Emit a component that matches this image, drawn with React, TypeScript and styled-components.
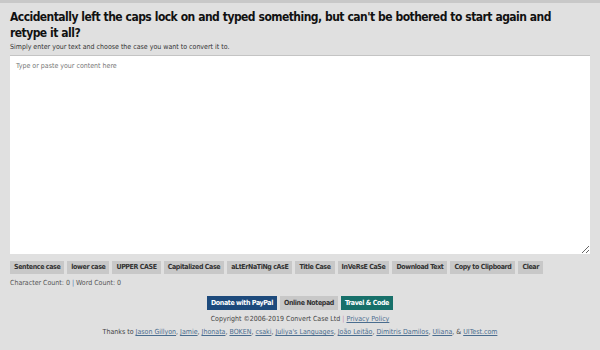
import React from "react";
import styled, { createGlobalStyle } from "styled-components";

const GlobalStyle = createGlobalStyle`
  html, body {
    margin: 0;
    padding: 0;
    background: #e0e0e0;
  }
  body {
    border-top: 3px solid #c8c8c8;
    font-family: "DejaVu Sans Condensed", "DejaVu Sans", sans-serif;
    color: #222;
  }
`;

const Page = styled.div`
  padding: 6px 10px 0 10px;
  display: flex;
  flex-direction: column;
`;

const Title = styled.h1`
  margin: 0;
  font-size: 12px;
  line-height: 16px;
  font-weight: bold;
  letter-spacing: -0.55px;
  word-spacing: 0.3px;
  color: #111;
`;

const Lead = styled.p`
  margin: 2px 0 3px 0;
  font-size: 7px;
  line-height: 9px;
  color: #333;
`;

const Editor = styled.textarea`
  box-sizing: border-box;
  width: 100%;
  height: 199px;
  margin: 0;
  border: none;
  border-top: 1px solid #c4c4c4;
  background: #fff;
  padding: 6px 6px;
  font-family: inherit;
  font-size: 7px;
  line-height: 9px;
  outline: none;
  display: block;
  &::placeholder {
    color: #777;
  }
`;

const ButtonRow = styled.div`
  display: flex;
  flex-wrap: wrap;
  gap: 3px;
  margin-top: 7px;
`;

const CaseButton = styled.button<{ $tone?: "grey" | "navy" | "teal"; $tall?: boolean }>`
  height: ${(p) => (p.$tall ? 14 : 13)}px;
  padding: 0 4px;
  border: none;
  margin: 0;
  font-family: inherit;
  font-size: 7px;
  font-weight: bold;
  letter-spacing: -0.38px;
  line-height: 13px;
  cursor: pointer;
  background: ${(p) =>
    p.$tone === "navy" ? "#1d4a7c" : p.$tone === "teal" ? "#17706a" : "#c8c8c8"};
  color: ${(p) => (p.$tone === "navy" || p.$tone === "teal" ? "#fff" : "#333")};
`;

const Counts = styled.div`
  margin-top: 5px;
  font-size: 7px;
  line-height: 9px;
  color: #555;
`;

const Sep = styled.span`
  color: #4a7ab0;
`;

const Footer = styled.div`
  display: flex;
  flex-direction: column;
  align-items: center;
  margin-top: 8px;
`;

const FooterButtons = styled.div`
  display: flex;
  gap: 3px;
`;

const FooterLine = styled.div<{ $gap: number }>`
  margin-top: ${(p) => p.$gap}px;
  font-size: 7px;
  line-height: 9px;
  color: #444;
  text-align: center;
`;

const Link = styled.a`
  color: #4a6d8f;
  text-decoration: underline;
`;

const PinkSep = styled.span`
  color: #c78fb0;
`;

const cases = [
  "Sentence case",
  "lower case",
  "UPPER CASE",
  "Capitalized Case",
  "aLtErNaTiNg cAsE",
  "Title Case",
  "InVeRsE CaSe",
  "Download Text",
  "Copy to Clipboard",
  "Clear",
];

const thanks = [
  "Jason Gillyon",
  "Jamie",
  "Jhonata",
  "BOKEN",
  "csaki",
  "Juliya's Languages",
  "João Leitão",
  "Dimitris Damilos",
  "Uliana",
];

export default function App() {
  return (
    <>
      <GlobalStyle />
      <Page>
        <Title>
          Accidentally left the caps lock on and typed something, but can't be bothered to start again and
          retype it all?
        </Title>
        <Lead>Simply enter your text and choose the case you want to convert it to.</Lead>
        <Editor placeholder="Type or paste your content here" />
        <ButtonRow>
          {cases.map((c) => (
            <CaseButton key={c}>{c}</CaseButton>
          ))}
        </ButtonRow>
        <Counts>
          Character Count: 0 <Sep>|</Sep> Word Count: 0
        </Counts>
        <Footer>
          <FooterButtons>
            <CaseButton $tone="navy" $tall>Donate with PayPal</CaseButton>
            <CaseButton $tall>Online Notepad</CaseButton>
            <CaseButton $tone="teal" $tall>Travel &amp; Code</CaseButton>
          </FooterButtons>
          <FooterLine $gap={5}>
            Copyright ©2006-2019 Convert Case Ltd <PinkSep>|</PinkSep> <Link href="#">Privacy Policy</Link>
          </FooterLine>
          <FooterLine $gap={4}>
            Thanks to{" "}
            {thanks.map((t) => (
              <React.Fragment key={t}>
                <Link href="#">{t}</Link>,{" "}
              </React.Fragment>
            ))}
            &amp; <Link href="#">UITest.com</Link>
          </FooterLine>
        </Footer>
      </Page>
    </>
  );
}
